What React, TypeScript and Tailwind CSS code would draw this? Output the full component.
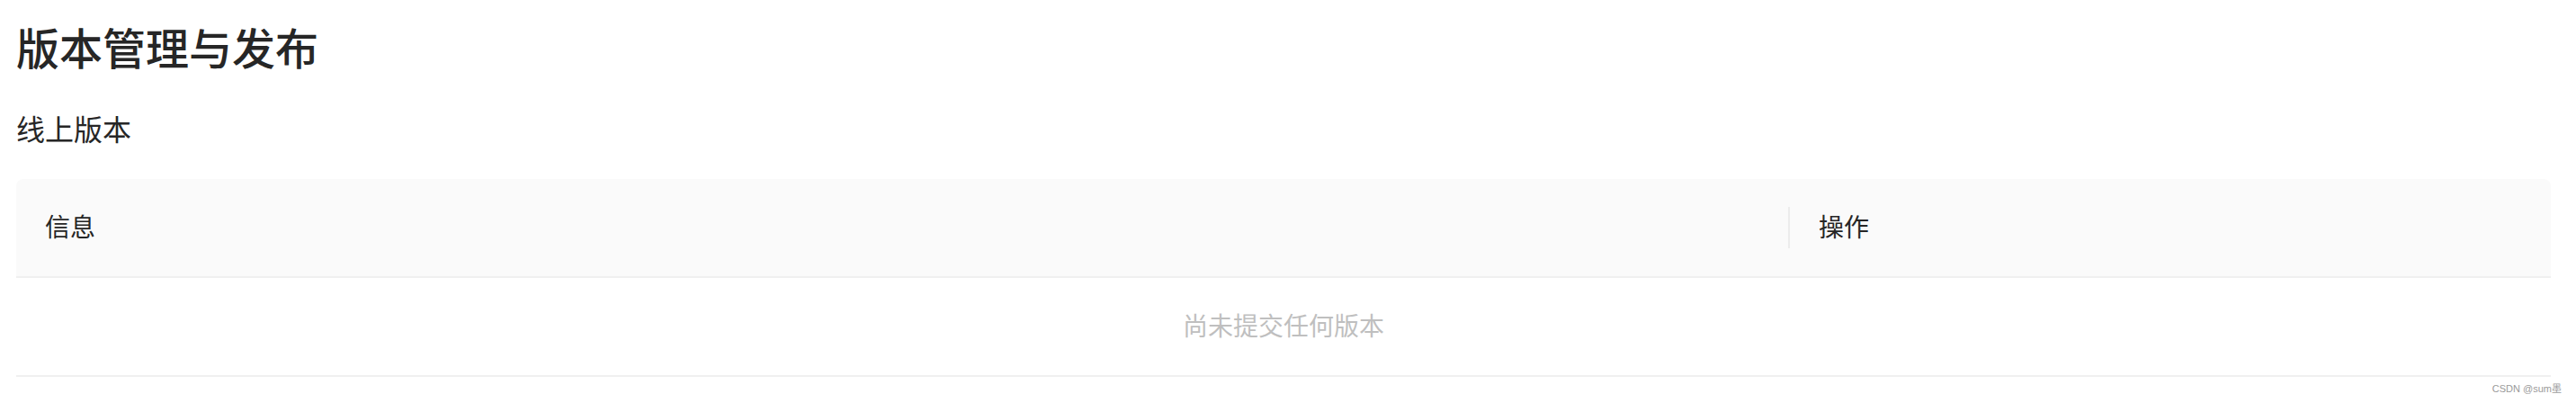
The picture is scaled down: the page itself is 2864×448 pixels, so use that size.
import React from "react";

export default function App() {
  return (
    <div
      className="relative w-[2864px] h-[448px] bg-white pl-[18px] overflow-hidden"
      style={{ fontFamily: '"Noto Sans CJK SC", "Noto Sans", sans-serif' }}
    >
      <h1 className="pt-[19px] h-[84px] text-[48px] leading-[64px] font-medium text-[#262626]">
        版本管理与发布
      </h1>
      <h2 className="mt-[36px] h-[44px] text-[32px] leading-[44px] font-normal text-[#262626]">
        线上版本
      </h2>
      <div className="mt-[35px] w-[2818px]">
        <div className="flex h-[110px] items-center bg-[#fafafa] rounded-t-[8px] border-b-2 border-[#f0f0f0]">
          <div className="flex w-[1972px] items-center justify-between">
            <span className="pl-[32px] mb-[4px] text-[28px] leading-[40px] text-[#262626]">信息</span>
            <span className="w-[2px] h-[46px] bg-[#ececec]" />
          </div>
          <div className="pl-[32px] mb-[4px] text-[28px] leading-[40px] text-[#262626]">操作</div>
        </div>
        <div className="flex h-[110px] items-center justify-center border-b-2 border-[#f0f0f0]">
          <span className="mb-[4px] text-[28px] leading-[40px] text-[#bfbfbf]">尚未提交任何版本</span>
        </div>
      </div>
      <div
        className="absolute top-[424px] right-[16px] text-[11px] leading-[16px] text-[#9a9a9a]"
        style={{ fontFamily: '"Liberation Sans", "Noto Sans CJK SC", sans-serif' }}
      >
        CSDN @sum墨
      </div>
    </div>
  );
}
